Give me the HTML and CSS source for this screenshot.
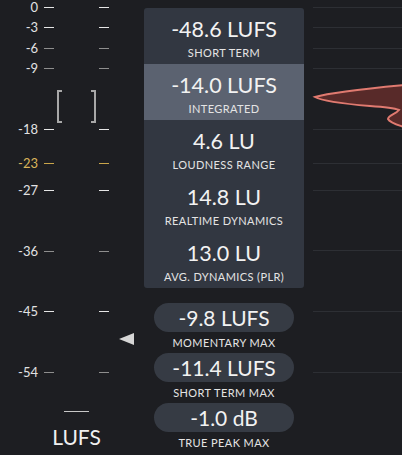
FILE: index.html
```html
<!DOCTYPE html>
<html lang="en">
<head>
    <meta charset="UTF-8">
    <title>Loudness Meter</title>
    <link rel="stylesheet" href="styles.css">
</head>
<body>
    <div class="scale">
      <div class="tick-row" style="top: 0px"><span class="db">0</span><i class="mark"></i><i class="mark"></i></div>
      <div class="tick-row" style="top: 20px"><span class="db">-3</span><i class="mark"></i><i class="mark"></i></div>
      <div class="tick-row dim" style="top: 41px"><span class="db">-6</span><i class="mark"></i><i class="mark"></i></div>
      <div class="tick-row dim" style="top: 61px"><span class="db">-9</span><i class="mark"></i><i class="mark"></i></div>
      <div class="tick-row" style="top: 122px"><span class="db">-18</span><i class="mark"></i><i class="mark"></i></div>
      <div class="tick-row target" style="top: 156px"><span class="db">-23</span><i class="mark"></i><i class="mark"></i></div>
      <div class="tick-row" style="top: 183px"><span class="db">-27</span><i class="mark"></i><i class="mark"></i></div>
      <div class="tick-row dim" style="top: 244px"><span class="db">-36</span><i class="mark"></i><i class="mark"></i></div>
      <div class="tick-row" style="top: 304px"><span class="db">-45</span><i class="mark"></i><i class="mark"></i></div>
      <div class="tick-row dim" style="top: 365px"><span class="db">-54</span><i class="mark"></i><i class="mark"></i></div>

      <!-- loudness range brackets -->
      <div class="bracket left" style="top: 90px; height: 33px"></div>
      <div class="bracket right" style="top: 90px; height: 33px"></div>

      <!-- short term pointer -->
      <div class="pointer" style="top: 333px"></div>

      <div class="unit">
        <div class="unit-line"></div>
        <div class="unit-name">LUFS</div>
      </div>
    </div>

    <div class="readouts">
      <div class="panel">
        <div class="stat">
          <div class="value">-48.6 LUFS</div>
          <div class="label">SHORT TERM</div>
        </div>
        <div class="stat selected">
          <div class="value">-14.0 LUFS</div>
          <div class="label">INTEGRATED</div>
        </div>
        <div class="stat">
          <div class="value">4.6 LU</div>
          <div class="label">LOUDNESS RANGE</div>
        </div>
        <div class="stat">
          <div class="value">14.8 LU</div>
          <div class="label">REALTIME DYNAMICS</div>
        </div>
        <div class="stat">
          <div class="value">13.0 LU</div>
          <div class="label">AVG. DYNAMICS (PLR)</div>
        </div>
      </div>

      <div class="maxes">
        <div class="max">
          <div class="pill">-9.8 LUFS</div>
          <div class="label">MOMENTARY MAX</div>
        </div>
        <div class="max">
          <div class="pill">-11.4 LUFS</div>
          <div class="label">SHORT TERM MAX</div>
        </div>
        <div class="max">
          <div class="pill">-1.0 dB</div>
          <div class="label">TRUE PEAK MAX</div>
        </div>
      </div>
    </div>

    <div class="graph">
      <div class="grid-line" style="top: 7px"></div>
      <div class="grid-line" style="top: 27px"></div>
      <div class="grid-line" style="top: 48px"></div>
      <div class="grid-line" style="top: 68px"></div>
      <div class="grid-line" style="top: 129px"></div>
      <div class="grid-line" style="top: 163px"></div>
      <div class="grid-line" style="top: 190px"></div>
      <div class="grid-line" style="top: 250px"></div>
      <div class="grid-line" style="top: 311px"></div>
      <div class="grid-line" style="top: 372px"></div>
      <svg class="histogram" width="98" height="455" viewBox="304 0 98 455">
        <path d="M404,85 C372,88 332,92 315,97 C322,101 346,104 370,106 C385,107 394,108 399,110 C396,114 388,115 388,119 C390,123 398,125 404,127 Z" fill="#582a29" stroke="#e07a70" stroke-width="2"/>
      </svg>
    </div>
</body>
</html>
```

FILE: styles.css
```css
* {
    box-sizing: border-box;
    margin: 0;
    padding: 0;
}

body {
    font-family: 'Lato', 'Noto Sans', sans-serif;
    background: #1d1e22;
    color: #e8e8e8;
    display: flex;
    height: 455px;
    overflow: hidden;
}

/* left meter scale */
.scale {
    width: 144px;
    flex-shrink: 0;
    position: relative;
}

.tick-row {
    position: absolute;
    left: 0;
    height: 14px;
    display: flex;
    align-items: center;
}

.db {
    width: 38px;
    text-align: right;
    font-size: 13px;
    line-height: 14px;
    color: #e2e2e2;
}

.mark {
    width: 10px;
    height: 1px;
    background: #e6e6e6;
    margin-left: 6px;
}

.mark + .mark {
    margin-left: 45px;
}

.dim .mark {
    background: #8e8e8e;
}

.target .db {
    color: #dab45a;
}

.target .mark {
    background: #c9a54a;
}

.bracket {
    position: absolute;
    width: 5px;
    border: 2px solid #a8a8a8;
}

.bracket.left {
    left: 57px;
    border-right: none;
}

.bracket.right {
    left: 91px;
    border-left: none;
}

.pointer {
    position: absolute;
    left: 119px;
    width: 0;
    height: 0;
    border-top: 6.5px solid transparent;
    border-bottom: 6.5px solid transparent;
    border-right: 15px solid #d6d6d6;
}

.unit {
    position: absolute;
    left: 0;
    right: 0;
    top: 411px;
    display: flex;
    flex-direction: column;
    align-items: center;
    padding-left: 9px;
}

.unit-line {
    width: 25px;
    height: 1px;
    background: #c8c8c8;
}

.unit-name {
    margin-top: 12px;
    font-size: 21px;
    line-height: 25px;
    color: #f0f0f0;
}

/* readouts column */
.readouts {
    width: 160px;
    flex-shrink: 0;
    padding-top: 8px;
}

.panel {
    background: #323741;
    border-radius: 3px;
    overflow: hidden;
}

.stat {
    height: 56px;
    padding-top: 9px;
    text-align: center;
}

.stat.selected {
    background: #5b6270;
}

.value {
    font-size: 21.5px;
    line-height: 24px;
    color: #f2f2f2;
}

.label {
    margin-top: 5px;
    font-size: 11px;
    line-height: 14px;
    letter-spacing: 0.4px;
    color: #e4e4e4;
}

.maxes {
    padding: 15px 10px 0;
    display: flex;
    flex-direction: column;
}

.max {
    height: 50px;
    text-align: center;
}

.pill {
    height: 29px;
    border-radius: 15px;
    background: #363b44;
    font-size: 21px;
    line-height: 29px;
    color: #f2f2f2;
}

.max .label {
    margin-top: 4px;
}

/* history graph */
.graph {
    flex: 1;
    position: relative;
}

.grid-line {
    position: absolute;
    left: 9px;
    right: 0;
    height: 1px;
    background: #2d2f34;
}

.histogram {
    position: absolute;
    left: 0;
    top: 0;
}
```
